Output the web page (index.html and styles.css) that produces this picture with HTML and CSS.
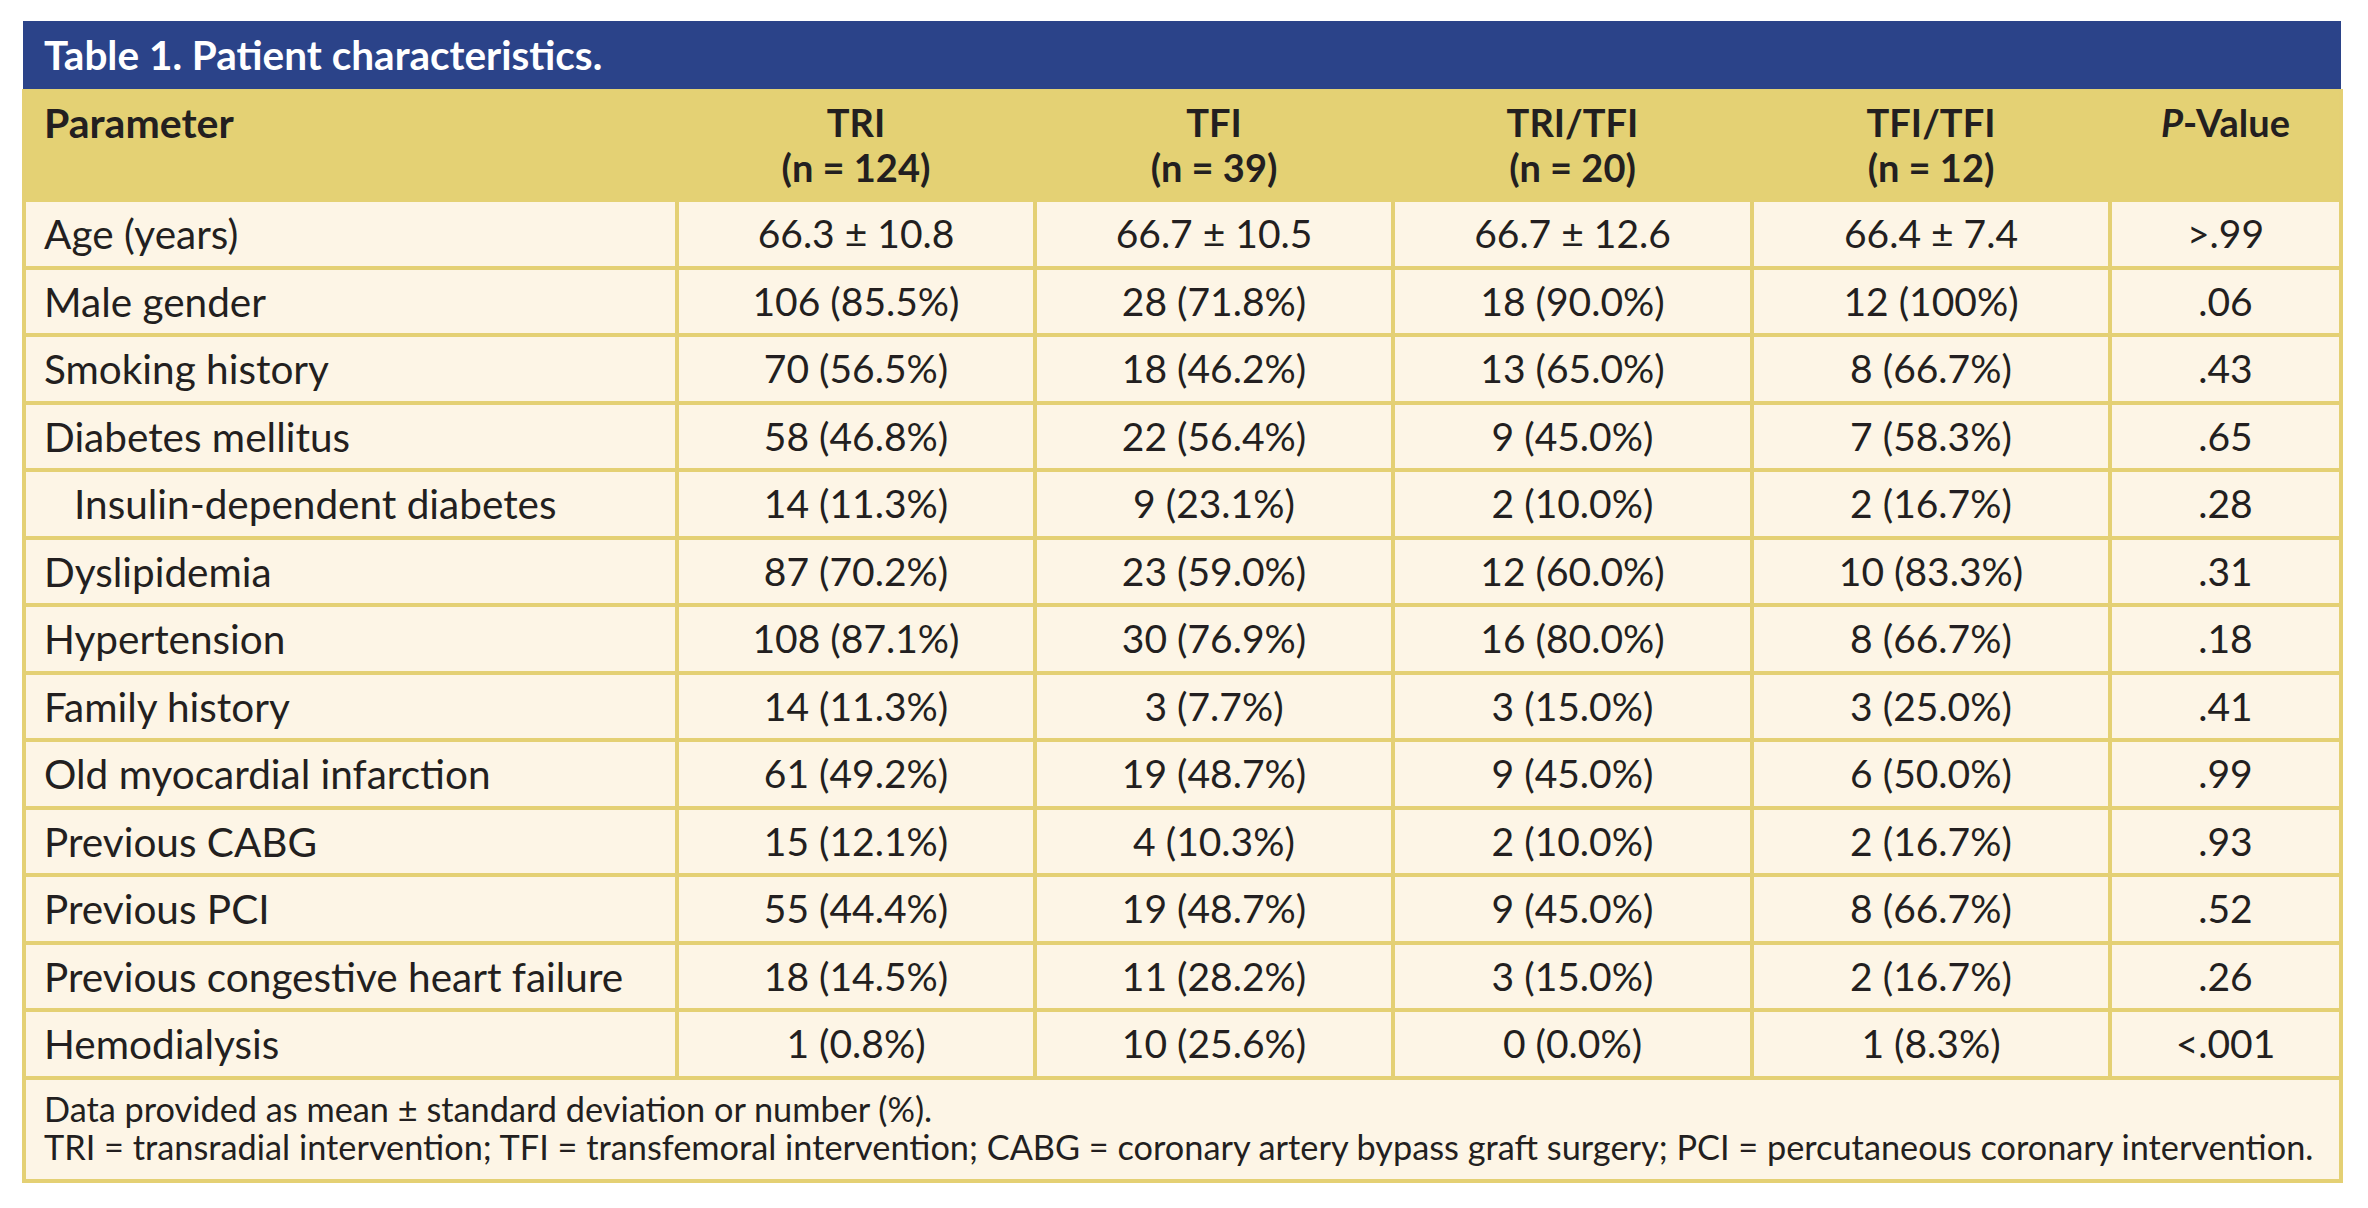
FILE: index.html
```html
<!DOCTYPE html>
<html lang="en">
<head>
<meta charset="utf-8">
<title>Table 1. Patient characteristics.</title>
<link rel="stylesheet" href="styles.css">
</head>
<body>
<div class="panel">
  <div class="title">Table 1. Patient characteristics.</div>
  <table class="data">
    <colgroup>
      <col class="c-param"><col class="c-val"><col class="c-val"><col class="c-val4"><col class="c-val"><col class="c-p">
    </colgroup>
    <thead>
      <tr>
        <th class="param">Parameter</th>
        <th>TRI<br>(n = 124)</th>
        <th>TFI<br>(n = 39)</th>
        <th>TRI/TFI<br>(n = 20)</th>
        <th>TFI/TFI<br>(n = 12)</th>
        <th class="last"><i>P</i>-Value</th>
      </tr>
    </thead>
    <tbody>
      <tr><td class="param">Age (years)</td><td>66.3 ± 10.8</td><td>66.7 ± 10.5</td><td>66.7 ± 12.6</td><td>66.4 ± 7.4</td><td class="last">&gt;.99</td></tr>
      <tr><td class="param">Male gender</td><td>106 (85.5%)</td><td>28 (71.8%)</td><td>18 (90.0%)</td><td>12 (100%)</td><td class="last">.06</td></tr>
      <tr><td class="param">Smoking history</td><td>70 (56.5%)</td><td>18 (46.2%)</td><td>13 (65.0%)</td><td>8 (66.7%)</td><td class="last">.43</td></tr>
      <tr><td class="param">Diabetes mellitus</td><td>58 (46.8%)</td><td>22 (56.4%)</td><td>9 (45.0%)</td><td>7 (58.3%)</td><td class="last">.65</td></tr>
      <tr><td class="param sub">Insulin-dependent diabetes</td><td>14 (11.3%)</td><td>9 (23.1%)</td><td>2 (10.0%)</td><td>2 (16.7%)</td><td class="last">.28</td></tr>
      <tr><td class="param">Dyslipidemia</td><td>87 (70.2%)</td><td>23 (59.0%)</td><td>12 (60.0%)</td><td>10 (83.3%)</td><td class="last">.31</td></tr>
      <tr><td class="param">Hypertension</td><td>108 (87.1%)</td><td>30 (76.9%)</td><td>16 (80.0%)</td><td>8 (66.7%)</td><td class="last">.18</td></tr>
      <tr><td class="param">Family history</td><td>14 (11.3%)</td><td>3 (7.7%)</td><td>3 (15.0%)</td><td>3 (25.0%)</td><td class="last">.41</td></tr>
      <tr><td class="param">Old myocardial infarction</td><td>61 (49.2%)</td><td>19 (48.7%)</td><td>9 (45.0%)</td><td>6 (50.0%)</td><td class="last">.99</td></tr>
      <tr><td class="param">Previous CABG</td><td>15 (12.1%)</td><td>4 (10.3%)</td><td>2 (10.0%)</td><td>2 (16.7%)</td><td class="last">.93</td></tr>
      <tr><td class="param">Previous PCI</td><td>55 (44.4%)</td><td>19 (48.7%)</td><td>9 (45.0%)</td><td>8 (66.7%)</td><td class="last">.52</td></tr>
      <tr><td class="param">Previous congestive heart failure</td><td>18 (14.5%)</td><td>11 (28.2%)</td><td>3 (15.0%)</td><td>2 (16.7%)</td><td class="last">.26</td></tr>
      <tr><td class="param">Hemodialysis</td><td>1 (0.8%)</td><td>10 (25.6%)</td><td>0 (0.0%)</td><td>1 (8.3%)</td><td class="last">&lt;.001</td></tr>
    </tbody>
    <tfoot>
      <tr>
        <td class="foot" colspan="6">Data provided as mean ± standard deviation or number (%).<br>TRI = transradial intervention; TFI = transfemoral intervention; CABG = coronary artery bypass graft surgery; PCI = percutaneous coronary intervention.</td>
      </tr>
    </tfoot>
  </table>
</div>
</body>
</html>
```
FILE: styles.css
```css
html, body {
  margin: 0;
  padding: 0;
  background: #ffffff;
}

body {
  font-family: Lato, "Open Sans", "Liberation Sans", sans-serif;
  color: #231f20;
}

.panel {
  width: 2321px;
  margin: 21px 0 0 22px;
}

.title {
  height: 68px;
  box-sizing: border-box;
  margin-left: 1px;
  margin-right: 2px;
  padding-left: 21px;
  background: #2b4389;
  color: #ffffff;
  font-weight: 700;
  font-size: 40.5px;
  line-height: 68px;
  white-space: nowrap;
}

.data {
  width: 2321px;
  border-collapse: separate;
  border-spacing: 0;
  table-layout: fixed;
  border-left: 4px solid #e4d074;
  border-right: 4px solid #e4d074;
  border-bottom: 4px solid #e4d074;
  background: #fdf5e6;
}

.c-param { width: 653px; }
.c-val { width: 358px; }
.c-val4 { width: 359px; }
.c-p { width: 227px; }

.data th,
.data td {
  padding: 0;
  text-align: center;
  white-space: nowrap;
  box-sizing: border-box;
}

.data thead th {
  background: #e4d174;
  height: 113px;
  vertical-align: top;
  padding-top: 11px;
  font-weight: 700;
  font-size: 38px;
  line-height: 45px;
  border-right: 4px solid #e4d174;
}

.data thead th.param {
  font-size: 41px;
}

.data tbody td {
  height: 67.5px;
  vertical-align: middle;
  font-size: 39px;
  line-height: 45px;
  border-right: 4px solid #e4d074;
  border-bottom: 4px solid #e4d074;
}

.data tbody td.param {
  font-size: 40.5px;
}

.data th.last,
.data td.last {
  border-right: 0;
}

.data .param {
  text-align: left;
  padding-left: 18px;
}

.data .param.sub {
  padding-left: 48px;
}

.data tfoot td.foot {
  height: 99px;
  text-align: left;
  vertical-align: top;
  padding: 10px 0 0 18px;
  font-size: 34.3px;
  line-height: 38px;
}
```
